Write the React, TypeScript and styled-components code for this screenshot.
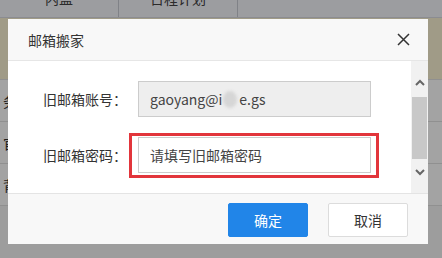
import React from "react";
import styled, { createGlobalStyle } from "styled-components";

const GlobalStyle = createGlobalStyle`
	html, body {
		margin: 0;
		padding: 0;
		background: #fff;
	}
	* {
		box-sizing: border-box;
	}
	body {
		font-family: "Noto Sans CJK SC", "Noto Sans", sans-serif;
		color: #333;
	}
`;

const Screen = styled.div`
	position: relative;
	width: 442px;
	height: 258px;
	overflow: hidden;
`;

/* page behind the mask */
const Page = styled.div`
	width: 100%;
	height: 100%;
	display: flex;
	flex-direction: column;
	background: #f6f6f6;
`;

const TabBar = styled.div`
	height: 18px;
	display: flex;
	background: #f4f6fb;
	border-bottom: 1px solid #d9dce3;
`;

const Tab = styled.div<{ $w: number }>`
	width: ${(p) => p.$w}px;
	border-right: 1px solid #c9ccd4;
	display: flex;
	justify-content: center;
	font-size: 14px;
	line-height: 14px;
	margin-top: -9px;
	color: #444;
`;

const TableHead = styled.div`
	height: 62px;
	background: #fbf3d4;
	border-bottom: 1px solid #e2e2e2;
`;

const TableRow = styled.div`
	height: 42px;
	border-bottom: 1px solid #e2e2e2;
	display: flex;
	align-items: center;
	padding-left: 3px;
	font-size: 14px;
	color: #333;
	background: #fff;
`;

const Mask = styled.div`
	position: absolute;
	inset: 0;
	background: rgba(0, 0, 0, 0.36);
`;

const Dialog = styled.div`
	position: absolute;
	top: 19px;
	left: 8px;
	width: 420px;
	height: 225px;
	background: #f8f8f8;
	display: flex;
	flex-direction: column;
`;

const Header = styled.div`
	height: 42px;
	display: flex;
	align-items: center;
	justify-content: space-between;
	padding: 0 18px 0 20px;
	border-bottom: 1px solid #e6e6e6;
`;

const Title = styled.div`
	font-size: 14px;
	color: #333;
`;

const CloseButton = styled.button`
	border: none;
	background: none;
	padding: 0;
	width: 13px;
	height: 13px;
	display: flex;
	cursor: pointer;
`;

const Body = styled.div`
	height: 132px;
	display: flex;
`;

const Form = styled.div`
	flex: 1;
	background: #fff;
	padding: 20px 0 0 35px;
	display: flex;
	flex-direction: column;
	gap: 20px;
`;

const Row = styled.div`
	display: flex;
	align-items: center;
	height: 36px;
`;

const Label = styled.label`
	width: 95px;
	font-size: 14px;
	color: #333;
`;

const Field = styled.div<{ $readOnly?: boolean }>`
	position: relative;
	width: 233px;
	height: 36px;
	border: 1px solid #ccc;
	background: ${(p) => (p.$readOnly ? "#eeeeee" : "#fff")};
	display: flex;
	align-items: center;
	padding: 0 11px;
	font-size: 14px;
	color: #444;
`;

const PasswordInput = styled.input`
	border: none;
	outline: none;
	width: 100%;
	padding: 0;
	background: transparent;
	font: inherit;
	color: #444;
	&::placeholder {
		color: #444;
	}
`;

const Blur = styled.span`
	display: inline-block;
	width: 14px;
	height: 17px;
	margin: 0 2px 0 1px;
	border-radius: 50%;
	background: #d6d6d6;
	filter: blur(1.5px);
`;

/* red annotation drawn over the screenshot */
const Highlight = styled.div`
	position: absolute;
	top: -5px;
	left: -10px;
	right: -9px;
	bottom: -6px;
	border: 3px solid #e2353b;
	pointer-events: none;
`;

const Scrollbar = styled.div`
	width: 17px;
	background: #f1f1f1;
	display: flex;
	flex-direction: column;
	align-items: center;
	padding-top: 18px;
`;

const Thumb = styled.div`
	width: 15px;
	height: 62px;
	margin: 11px 0 10px;
	background: #c8c8c8;
`;

const Footer = styled.div`
	flex: 1;
	border-top: 1px solid #e4e4e4;
	display: flex;
	align-items: center;
	justify-content: flex-end;
	gap: 20px;
	padding: 1px 20px 0 0;
`;

const Button = styled.button<{ $primary?: boolean }>`
	width: 80px;
	height: 34px;
	border-radius: 2px;
	font-family: inherit;
	font-size: 14px;
	cursor: pointer;
	border: 1px solid ${(p) => (p.$primary ? "#2185e8" : "#dcdcdc")};
	background: ${(p) => (p.$primary ? "#2185e8" : "#fff")};
	color: ${(p) => (p.$primary ? "#fff" : "#333")};
`;

const Chevron = ({ up }: { up?: boolean }) => (
	<svg width="10" height="7" viewBox="0 0 10 7">
		<path
			d={up ? "M1 6 L5 2 L9 6" : "M1 1 L5 5 L9 1"}
			fill="none"
			stroke="#666"
			strokeWidth="2"
		/>
	</svg>
);

const App = () => {
	return (
		<Screen>
			<GlobalStyle />
			<Page>
				<TabBar>
					<Tab $w={119}>内盟</Tab>
					<Tab $w={119}>日程计划</Tab>
				</TabBar>
				<TableHead />
				<TableRow>务</TableRow>
				<TableRow>官</TableRow>
				<TableRow>背</TableRow>
			</Page>
			<Mask />
			<Dialog>
				<Header>
					<Title>邮箱搬家</Title>
					<CloseButton aria-label="关闭">
						<svg width="13" height="13" viewBox="0 0 13 13">
							<path d="M1 1 L12 12 M12 1 L1 12" stroke="#333" strokeWidth="1.5" />
						</svg>
					</CloseButton>
				</Header>
				<Body>
					<Form>
						<Row>
							<Label>旧邮箱账号：</Label>
							<Field $readOnly>
								gaoyang@i<Blur />e.gs
							</Field>
						</Row>
						<Row>
							<Label>旧邮箱密码：</Label>
							<Field>
								<PasswordInput type="password" placeholder="请填写旧邮箱密码" />
								<Highlight />
							</Field>
						</Row>
					</Form>
					<Scrollbar>
						<Chevron up />
						<Thumb />
						<Chevron />
					</Scrollbar>
				</Body>
				<Footer>
					<Button $primary>确定</Button>
					<Button>取消</Button>
				</Footer>
			</Dialog>
		</Screen>
	);
};

export default App;
